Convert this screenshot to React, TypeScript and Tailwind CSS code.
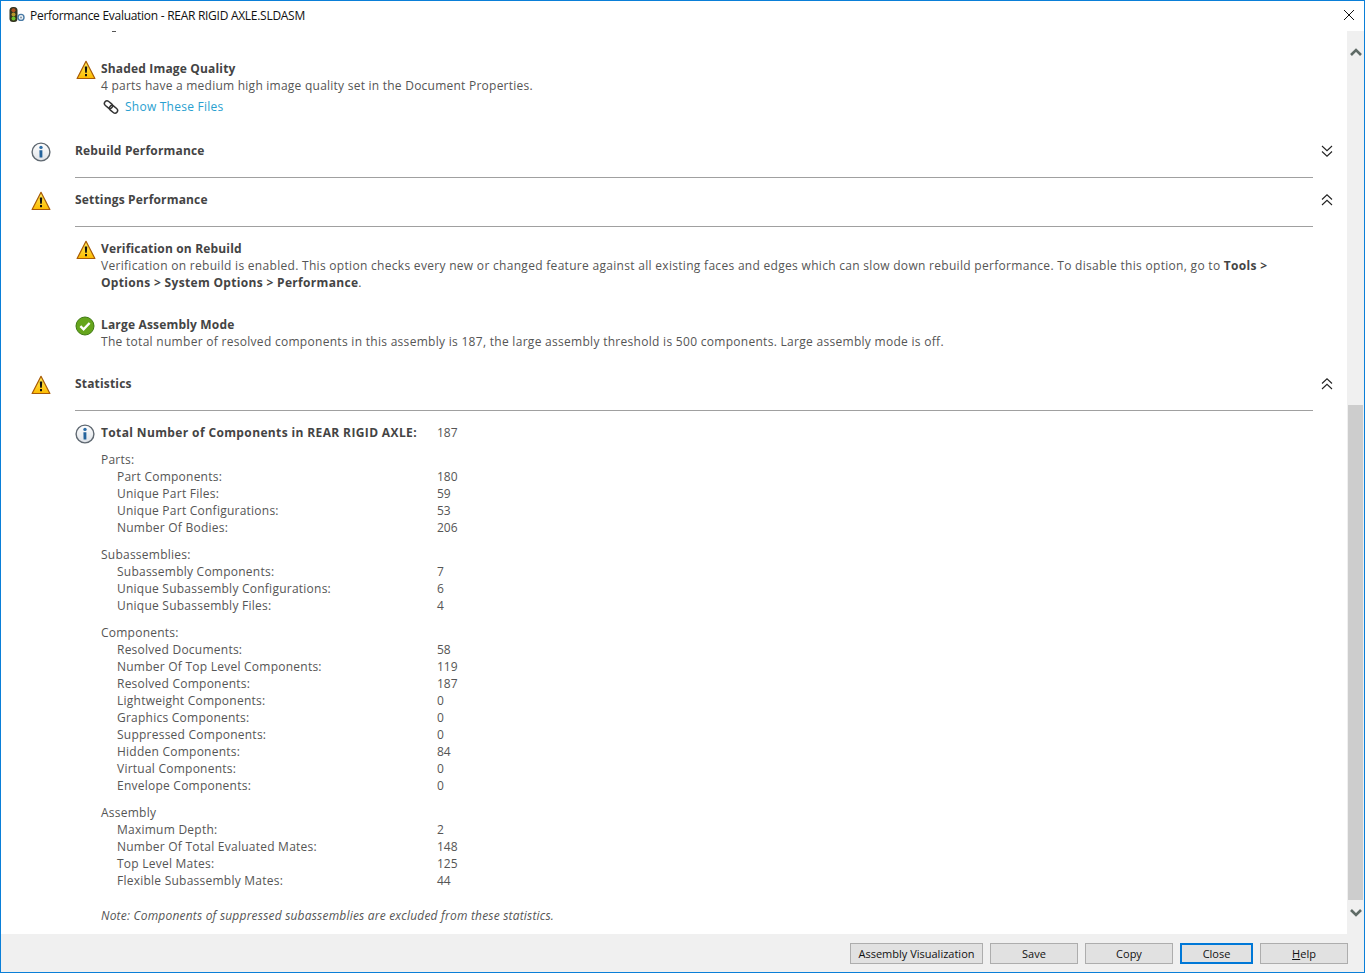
import React from 'react';

const WarnIcon = ({ className = '' }: { className?: string }) => (
  <svg viewBox="0 0 20 20" className={`w-5 h-5 shrink-0 ${className}`}>
    <defs>
      <linearGradient id="warnFill" x1="0" y1="0" x2="0" y2="1">
        <stop offset="0" stopColor="#ffec5c" />
        <stop offset="1" stopColor="#fdbb00" />
      </linearGradient>
    </defs>
    <path d="M10 1.3 L18.9 18.5 H1.1 Z" fill="url(#warnFill)" stroke="#a85a06" strokeWidth="1.2" strokeLinejoin="round" />
    <path d="M8.8 6.4 H11.2 L10.8 12.8 H9.2 Z" fill="#111" />
    <rect x="9" y="14" width="2" height="2.2" fill="#111" />
  </svg>
);

const InfoIcon = () => (
  <svg viewBox="0 0 20 20" className="w-5 h-5 shrink-0">
    <defs>
      <linearGradient id="infoFill" x1="0" y1="0" x2="0" y2="1">
        <stop offset="0" stopColor="#ffffff" />
        <stop offset="1" stopColor="#dfe3e8" />
      </linearGradient>
    </defs>
    <circle cx="10" cy="10" r="8.9" fill="url(#infoFill)" stroke="#5f6871" strokeWidth="1.4" />
    <circle cx="10" cy="5.4" r="1.7" fill="#2f6fa8" />
    <path d="M8.4 8.2 H11.4 V15.6 H8.6 Z" fill="#24639c" />
  </svg>
);

const OkIcon = () => (
  <svg viewBox="0 0 20 20" className="w-5 h-5 shrink-0">
    <circle cx="10" cy="10" r="9" fill="#65a51c" stroke="#3f7a12" strokeWidth="1" />
    <path d="M5.4 10.2 L8.6 13.4 L14.6 7" fill="none" stroke="#fff" strokeWidth="2.4" />
  </svg>
);

const LinkIcon = () => (
  <svg viewBox="0 0 16 16" className="w-4 h-4 shrink-0" fill="none" stroke="#333" strokeWidth="1.5">
    <rect x="1" y="3.1" width="9" height="5.2" rx="2.6" transform="rotate(40 5.5 5.7)" />
    <rect x="6" y="7.7" width="9" height="5.2" rx="2.6" transform="rotate(40 10.5 10.3)" />
  </svg>
);

const AppIcon = () => (
  <svg viewBox="0 0 16 16" className="w-4 h-4 shrink-0">
    <rect x="0.5" y="0" width="8" height="15" rx="3.5" fill="#33331f" />
    <circle cx="4.5" cy="3.2" r="2" fill="#b0501f" />
    <circle cx="4.5" cy="7.4" r="2" fill="#b8962c" />
    <circle cx="4.5" cy="11.6" r="2" fill="#6fc02a" />
    <circle cx="12" cy="10.4" r="3" fill="#eef3f7" stroke="#4a7ba6" strokeWidth="1.4" />
    <circle cx="12" cy="10.4" r="1" fill="#7f93a6" />
  </svg>
);

const Chevrons = ({ up }: { up?: boolean }) => (
  <svg viewBox="0 0 12 12" className={`w-3 h-3 ${up ? '' : 'rotate-180'}`} fill="none" stroke="#222" strokeWidth="1.1">
    <path d="M1 5.5 L6 0.8 L11 5.5" />
    <path d="M1 11 L6 6.3 L11 11" />
  </svg>
);

const SectionHeader = ({ icon, title, up }: { icon: React.ReactNode; title: string; up?: boolean }) => (
  <div className="flex">
    <div className="w-[74px] shrink-0 pl-[30px]">{icon}</div>
    <div className="flex-1 h-[36px] border-b border-[#a0a0a0]">
      <div className="flex justify-between items-center h-[17px] font-bold text-[#444] tracking-[0.17px]">
        <span>{title}</span>
        <span className="relative left-[20px]"><Chevrons up={up} /></span>
      </div>
    </div>
  </div>
);

type Stat = [string, string];

const groups: { title: string; rows: Stat[] }[] = [
  {
    title: 'Parts:',
    rows: [
      ['Part Components:', '180'],
      ['Unique Part Files:', '59'],
      ['Unique Part Configurations:', '53'],
      ['Number Of Bodies:', '206'],
    ],
  },
  {
    title: 'Subassemblies:',
    rows: [
      ['Subassembly Components:', '7'],
      ['Unique Subassembly Configurations:', '6'],
      ['Unique Subassembly Files:', '4'],
    ],
  },
  {
    title: 'Components:',
    rows: [
      ['Resolved Documents:', '58'],
      ['Number Of Top Level Components:', '119'],
      ['Resolved Components:', '187'],
      ['Lightweight Components:', '0'],
      ['Graphics Components:', '0'],
      ['Suppressed Components:', '0'],
      ['Hidden Components:', '84'],
      ['Virtual Components:', '0'],
      ['Envelope Components:', '0'],
    ],
  },
  {
    title: 'Assembly',
    rows: [
      ['Maximum Depth:', '2'],
      ['Number Of Total Evaluated Mates:', '148'],
      ['Top Level Mates:', '125'],
      ['Flexible Subassembly Mates:', '44'],
    ],
  },
];

const Btn = ({ label, className = '', active }: { label: React.ReactNode; className?: string; active?: boolean }) => (
  <button
    className={`h-[21px] bg-[#e1e1e1] text-[11px] leading-none text-[#111] ${
      active ? 'border-2 border-[#0078d7]' : 'border border-[#adadad]'
    } ${className}`}
  >
    {label}
  </button>
);

export default function App() {
  return (
    <div className="w-[1365px] h-[973px] flex flex-col bg-white border border-[#0a7fd8] overflow-hidden font-['Open_Sans',sans-serif] text-[12px] leading-[17px] text-[#555] tracking-[0.24px]">
      <div className="h-[30px] shrink-0 flex items-center pl-[8px] pr-[9px] pb-[2px] text-[#111] tracking-[-0.28px]">
        <AppIcon />
        <span className="ml-[5px] flex-1">Performance Evaluation - REAR RIGID AXLE.SLDASM</span>
        <svg viewBox="0 0 12 12" className="w-3 h-3" stroke="#111" strokeWidth="1">
          <path d="M1 1 L11 11 M11 1 L1 11" />
        </svg>
      </div>

      <div className="flex-1 flex min-h-0">
        <div className="flex-1 min-w-0 overflow-hidden pr-[34px]">
          <div className="ml-[111px] w-[4px] h-px bg-[#555]" />

          <div className="flex pl-[75px] pt-[28px]">
            <WarnIcon className="mr-[5px]" />
            <div className="flex-1">
              <div className="font-bold text-[#444] tracking-[0.17px]">Shaded Image Quality</div>
              <div>4 parts have a medium high image quality set in the Document Properties.</div>
              <div className="flex items-center mt-[4px] ml-[2px] gap-[6px] text-[#2a9fd0]">
                <LinkIcon />
                Show These Files
              </div>
            </div>
          </div>

          <div className="pt-[27px] pb-[13px]">
            <SectionHeader icon={<InfoIcon />} title="Rebuild Performance" />
          </div>
          <SectionHeader icon={<WarnIcon />} title="Settings Performance" up />

          <div className="flex pl-[75px] pt-[13px]">
            <WarnIcon className="mr-[5px]" />
            <div className="flex-1">
              <div className="font-bold text-[#444] tracking-[0.17px]">Verification on Rebuild</div>
              <div className="tracking-[0.3px]">
                Verification on rebuild is enabled. This option checks every new or changed feature against all existing faces and edges which can slow down rebuild performance. To disable this option, go to <b className="text-[#444] tracking-[0.32px]">Tools &gt;<br />Options &gt; System Options &gt; Performance</b>.
              </div>
            </div>
          </div>

          <div className="flex pl-[74px] pt-[25px]">
            <OkIcon />
            <div className="flex-1 ml-[6px]">
              <div className="font-bold text-[#444] tracking-[0.17px]">Large Assembly Mode</div>
              <div className="tracking-[0.29px]">The total number of resolved components in this assembly is 187, the large assembly threshold is 500 components. Large assembly mode is off.</div>
            </div>
          </div>

          <div className="pt-[25px]">
            <SectionHeader icon={<WarnIcon />} title="Statistics" up />
          </div>
          <div className="flex pl-[74px] pt-[13px]">
            <InfoIcon />
            <div className="flex-1 ml-[6px]">
              <div className="flex font-bold text-[#444] tracking-[0.37px]">
                <span className="w-[336px]">Total Number of Components in REAR RIGID AXLE:</span>
                <span className="font-normal text-[#555] tracking-normal">187</span>
              </div>
              {groups.map((g) => (
                <div key={g.title} className="mt-[10px]">
                  <div>{g.title}</div>
                  {g.rows.map(([k, v]) => (
                    <div key={k} className="flex pl-[16px]">
                      <span className="w-[320px]">{k}</span>
                      <span className="tracking-normal">{v}</span>
                    </div>
                  ))}
                </div>
              ))}
              <div className="mt-[18px] italic tracking-[0.2px]">Note: Components of suppressed subassemblies are excluded from these statistics.</div>
            </div>
          </div>
        </div>

        <div className="w-[17px] shrink-0 flex flex-col items-center bg-[#f0f0f0]">
          <div className="h-[374px] w-full flex justify-center pt-[17px]">
            <svg viewBox="0 0 12 8" className="w-3 h-2" fill="none" stroke="#5f6b66" strokeWidth="2.6">
              <path d="M1 7 L6 2 L11 7" />
            </svg>
          </div>
          <div className="h-[495px] w-[15px] bg-[#cdcdcd]" />
          <div className="flex-1 w-full flex justify-center pt-[9px]">
            <svg viewBox="0 0 12 8" className="w-3 h-2" fill="none" stroke="#5f6b66" strokeWidth="2.6">
              <path d="M1 1 L6 6 L11 1" />
            </svg>
          </div>
        </div>
      </div>

      <div className="h-[38px] shrink-0 bg-[#f0f0f0] flex justify-end gap-[7px] pt-[9px] pr-[16px] tracking-normal">
        <Btn label="Assembly Visualization" className="w-[133px]" />
        <Btn label="Save" className="w-[88px]" />
        <Btn label="Copy" className="w-[88px]" />
        <Btn label="Close" active className="w-[73px]" />
        <Btn label={<><u>H</u>elp</>} className="w-[88px]" />
      </div>
    </div>
  );
}
